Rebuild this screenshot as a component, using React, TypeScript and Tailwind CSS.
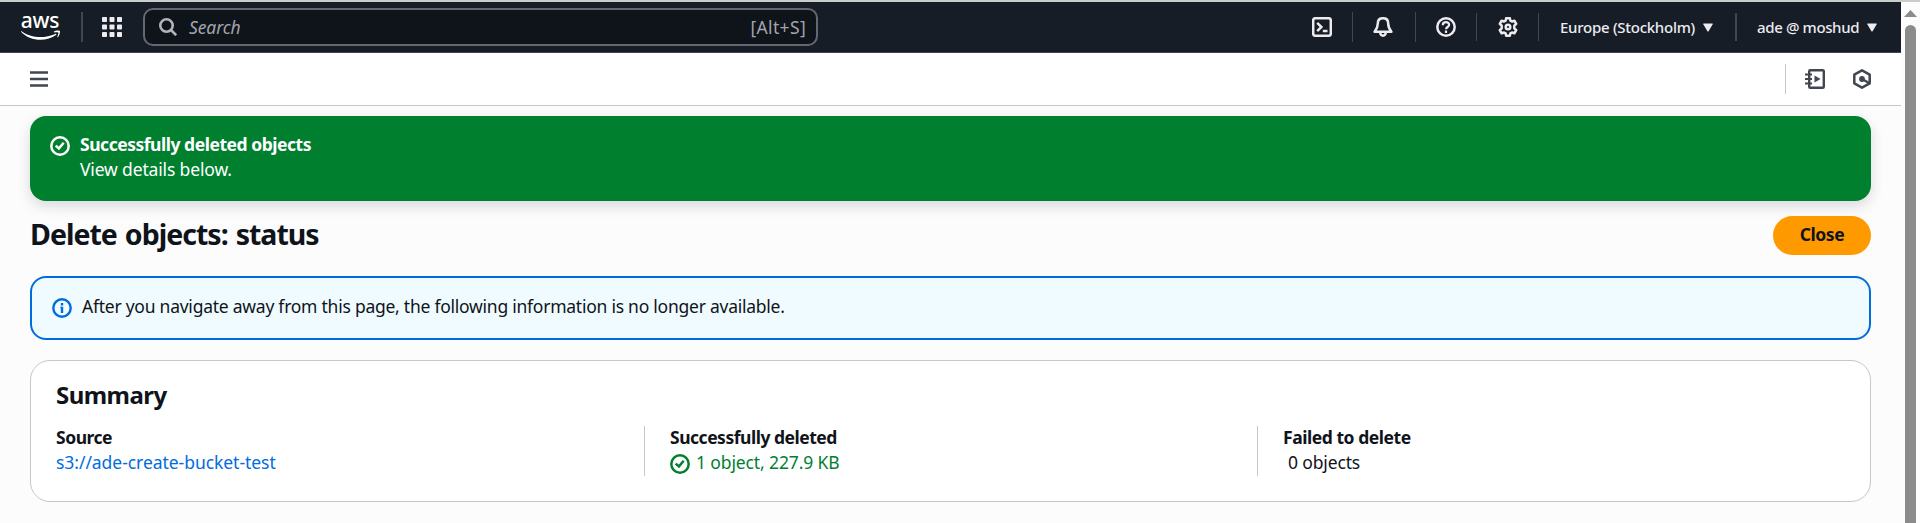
import type { ReactNode } from "react";

function CheckCircle() {
  return (
    <svg className="h-5 w-5 shrink-0" viewBox="0 0 20 20" fill="none" stroke="currentColor" strokeWidth="2.5">
      <circle cx="10" cy="10" r="8.7" />
      <path d="M5.7 9.6 8.9 12.4 13.7 6.8" />
    </svg>
  );
}

function InfoCircle() {
  return (
    <svg className="h-5 w-5 shrink-0" viewBox="0 0 20 20" fill="none" stroke="currentColor" strokeWidth="2.4">
      <circle cx="10" cy="10" r="8.7" />
      <path d="M10 8.8V15M10 5V7.4" />
      <path d="M8.6 9.5H10" strokeWidth="1.4" />
    </svg>
  );
}

function AwsLogo() {
  return (
    <div className="flex h-[26px] w-10 flex-col items-center">
      <span className="h-[15px] text-[21px] leading-[11px] font-medium tracking-[-0.3px] text-white">aws</span>
      <svg className="h-[10px] w-[39px]" viewBox="0 0 39 10" fill="#fff">
        <path d="M.4 1.200C5.500 4.800 12.500 7 19.400 7c5 0 10.400-1.100 15-3.100.8-.3 1.400.5.6 1.100C31 8 25 9.700 19.500 9.700 12 9.700 5 6.900.2 1.900-.3 1.400 0 .9.4 1.200z" />
        <path d="M33 1.500C34.800.3 38.300.2 38.800.9c.5.700-.1 4.600-2 6.300-.4.300-.7.100-.5-.3.500-1.200 1.400-3.600 1-4.300-.4-.6-2.800-.3-3.900-.2-.5 0-.6-.5-.4-.9z" />
      </svg>
    </div>
  );
}

function AppsGrid() {
  return (
    <svg className="h-5 w-5" viewBox="0 0 20 20" fill="#ebebf0">
      {[0, 7.5, 15].map((y) =>
        [0, 7.5, 15].map((x) => <rect key={`${x}-${y}`} x={x} y={y} width="5" height="5" rx="0.8" />)
      )}
    </svg>
  );
}

function NavIcon({ children }: { children: ReactNode }) {
  return (
    <svg
      className="h-5 w-5 text-[#ebebf0]"
      viewBox="0 0 20 20"
      fill="none"
      stroke="currentColor"
      strokeWidth="2.5"
      strokeLinejoin="round"
    >
      {children}
    </svg>
  );
}

function Caret() {
  return (
    <svg className="h-[9px] w-[10px]" viewBox="0 0 10 9" fill="#ebebf0">
      <path d="M.8.500h8.400c.5 0 .7.400.5.800L5.600 8.200c-.3.500-.9.500-1.200 0L.3 1.300C.1.900.3.500.8.500z" />
    </svg>
  );
}

function TopBar() {
  return (
    <header className="flex h-[51px] shrink-0 items-start border-b border-[#424650] bg-[#161d26] text-[#ebebf0]">
      <div className="ml-[20px] mt-[13px]">
        <AwsLogo />
      </div>
      <div className="ml-[21px] mt-[10px] h-[30px] w-[2px] bg-[#424650]" />
      <div className="ml-[19px] mt-[15px]">
        <AppsGrid />
      </div>
      <div className="ml-[21px] mt-[6px] flex h-[38px] w-[675px] items-center rounded-[10px] border-2 border-[#656871] bg-[#0f141a] pr-[10px] pl-[14px]">
        <svg className="h-[18px] w-[18px]" viewBox="0 0 18 18" fill="none" stroke="#b4b4bb" strokeWidth="2.6">
          <circle cx="7.500" cy="7.500" r="6.200" />
          <path d="M12 12l5.200 5.200" />
        </svg>
        <span className="ml-[12px] text-[17.5px] tracking-[-0.1px] text-[#a4a4ad] italic">Search</span>
        <span className="ml-auto text-[17.5px] tracking-[0.35px] text-[#a4a4ad]">[Alt+S]</span>
      </div>
      <div className="ml-[494px] mt-[15px]">
        <NavIcon>
          <rect x="1.200" y="1.200" width="17.600" height="17.600" rx="2.200" />
          <path d="M5.200 5.800 9.400 10 5.200 14.200M10.800 13.900h4.700" strokeLinejoin="miter" />
        </NavIcon>
      </div>
      <div className="ml-[20px] mt-[10px] h-[30px] w-px bg-[#424650]" />
      <div className="ml-[20px] mt-[15px]">
        <NavIcon>
          <path d="M10 1.200c-3.300 0-5.200 2.200-5.200 5.200 0 4-1 5.600-3.200 8.300h16.800c-2.200-2.700-3.200-4.300-3.200-8.300 0-3-1.900-5.200-5.200-5.200z" />
          <path d="M7.200 15.500c.2 2 1.200 3.200 2.800 3.200s2.600-1.200 2.800-3.200" />
        </NavIcon>
      </div>
      <div className="ml-[22px] mt-[10px] h-[30px] w-px bg-[#424650]" />
      <div className="ml-[20px] mt-[15px]">
        <NavIcon>
          <circle cx="10" cy="10" r="8.700" />
          <path d="M6.800 8.200C6.800 6 8.200 5.200 10 5.200s3.200 1 3.200 2.600c0 2.200-3.200 2.200-3.200 4.500M10 13.600v2.300" strokeWidth="2.200" />
        </NavIcon>
      </div>
      <div className="ml-[20px] mt-[11px] h-7 w-px bg-[#424650]" />
      <div className="ml-[21px] mt-[15px]">
        <NavIcon>
          <path d="M8.200 1.200h3.600l.6 2.400 1.500.9 2.500-.8 1.800 3.100L16.300 8.700v2.600l1.900 1.900-1.800 3.100-2.500-.8-1.500.9-.6 2.400H8.200l-.6-2.400-1.500-.9-2.500.8-1.800-3.100 1.900-1.900V8.700L1.800 6.800l1.800-3.100 2.500.8 1.500-.9z" />
          <circle cx="10" cy="10" r="2.300" />
        </NavIcon>
      </div>
      <div className="ml-[20px] mt-[11px] h-7 w-px bg-[#424650]" />
      <div className="ml-[21px] mt-[14px] flex h-[22px] w-[153px] items-center justify-between text-[15px] leading-[22px] font-medium tracking-[-0.27px] whitespace-nowrap">
        Europe (Stockholm)
        <Caret />
      </div>
      <div className="ml-[22px] mt-[11px] h-7 w-[2px] bg-[#424650]" />
      <div className="ml-[20px] mt-[14px] flex h-[22px] w-[120px] items-center justify-between text-[15px] leading-[22px] font-medium tracking-[-0.37px] whitespace-nowrap">
        ade @ moshud
        <Caret />
      </div>
    </header>
  );
}

function ToolBar() {
  return (
    <div className="flex h-[53px] shrink-0 items-start border-b border-[#c6c6cd] bg-white text-[#424650]">
      <svg className="mt-[18px] ml-[30px] h-4 w-[18px]" viewBox="0 0 18 16" fill="none" stroke="currentColor" strokeWidth="2.500">
        <path d="M0 1.500h18M0 8h18M0 14.500h18" />
      </svg>
      <div className="ml-auto mt-[11px] h-[30px] w-px bg-[#c6c6cd]" />
      <svg className="mt-4 ml-[19px] h-5 w-5" viewBox="0 0 20 20" fill="none" stroke="currentColor" strokeWidth="2.400">
        <rect x="4.200" y="1.200" width="14.600" height="17.600" rx="1" />
        <path d="M0 5.500h7M0 10h7M0 14.500h7" strokeWidth="2" />
        <path d="M9.500 6.500v7l6-3.500z" fill="currentColor" stroke="none" />
      </svg>
      <svg className="mt-4 mr-[30px] ml-[28px] h-5 w-[18px]" viewBox="0 0 18 20" fill="none" stroke="currentColor" strokeWidth="2.500" strokeLinejoin="round">
        <path d="M9 1.300 16.700 5.700v8.600L9 18.700 1.300 14.300V5.700z" />
        <circle cx="9" cy="10" r="2.900" fill="currentColor" stroke="none" />
        <path d="M9 10l7 4" />
      </svg>
    </div>
  );
}

function Scrollbar() {
  return (
    <div className="flex w-[19px] shrink-0 flex-col bg-[#fcfcfc]">
      <svg className="mt-2 ml-[3px] h-[7px] w-[13px]" viewBox="0 0 13 7" fill="#8b8b8b">
        <path d="M6.500 0 13 7H0z" />
      </svg>
      <div className="mt-2 ml-1 w-[11px] flex-1 rounded-t-full bg-[#8b8b8b]" />
    </div>
  );
}

export default function App() {
  return (
    <div className="flex h-[523px] w-[1920px] flex-col overflow-hidden bg-[#fcfcfd] font-['Noto_Sans',sans-serif] text-[#0f141a]">
      <div className="h-[2px] shrink-0 bg-[#cbcdcd]" />
      <div className="flex min-h-0 flex-1">
        <div className="flex w-[1901px] shrink-0 flex-col">
          <TopBar />
          <ToolBar />
          <main className="flex flex-col pt-[10px] pr-[30px] pl-[30px]">
            <div className="flex h-[85px] rounded-2xl bg-[#00802f] pt-5 pl-5 text-white shadow-[0_5px_14px_0_rgba(0,7,22,0.14)]">
              <CheckCircle />
              <div className="-mt-[4px] ml-[10px] text-[17.5px] leading-[25px]">
                <p className="font-bold tracking-[-0.47px]">Successfully deleted objects</p>
                <p className="tracking-[-0.15px]">View details below.</p>
              </div>
            </div>

            <div className="mt-[15px] flex h-[39px] items-start justify-between">
              <h1 className="-mt-px text-[28.5px] leading-[38px] font-bold tracking-[-0.98px] [word-spacing:1.5px]">
                Delete objects: status
              </h1>
              <button className="h-[39px] w-[98px] rounded-full bg-[#ff9900] pb-[2px] text-[17.5px] leading-[25px] font-bold tracking-[-0.47px]">
                Close
              </button>
            </div>

            <div className="mt-[21px] flex h-16 items-start rounded-2xl border-2 border-[#006ce0] bg-[#f0fbff] pt-5 pl-5">
              <span className="text-[#006ce0]">
                <InfoCircle />
              </span>
              <p className="-mt-[4px] ml-[10px] text-[17.5px] leading-[25px] tracking-[-0.246px]">
                After you navigate away from this page, the following information is no longer available.
              </p>
            </div>

            <section className="mt-5 h-[142px] rounded-[20px] border border-[#c6c6cd] bg-white px-[25px] pt-[19px]">
              <h2 className="text-[24px] leading-[30px] font-bold tracking-[-0.55px]">Summary</h2>
              <div className="mt-4 flex h-[50px] text-[17.5px] leading-[25px]">
                <div className="-mt-px w-[588px]">
                  <p className="font-bold tracking-[-0.47px]">Source</p>
                  <p className="tracking-[-0.05px] text-[#006ce0]">s3://ade-create-bucket-test</p>
                </div>
                <div className="w-[613px] border-l border-[#c6c6cd] pl-[25px]">
                  <p className="-mt-px font-bold tracking-[-0.48px]">Successfully deleted</p>
                  <div className="flex items-center gap-[6px] tracking-[-0.12px] text-[#00802f]">
                    <span className="mt-[3px]">
                      <CheckCircle />
                    </span>
                    1 object, 227.9 KB
                  </div>
                </div>
                <div className="flex-1 border-l border-[#c6c6cd] pl-[25px]">
                  <p className="-mt-px font-bold tracking-[-0.45px]">Failed to delete</p>
                  <p className="pl-[5px] tracking-[-0.15px]">0 objects</p>
                </div>
              </div>
            </section>
          </main>
        </div>
        <Scrollbar />
      </div>
    </div>
  );
}
